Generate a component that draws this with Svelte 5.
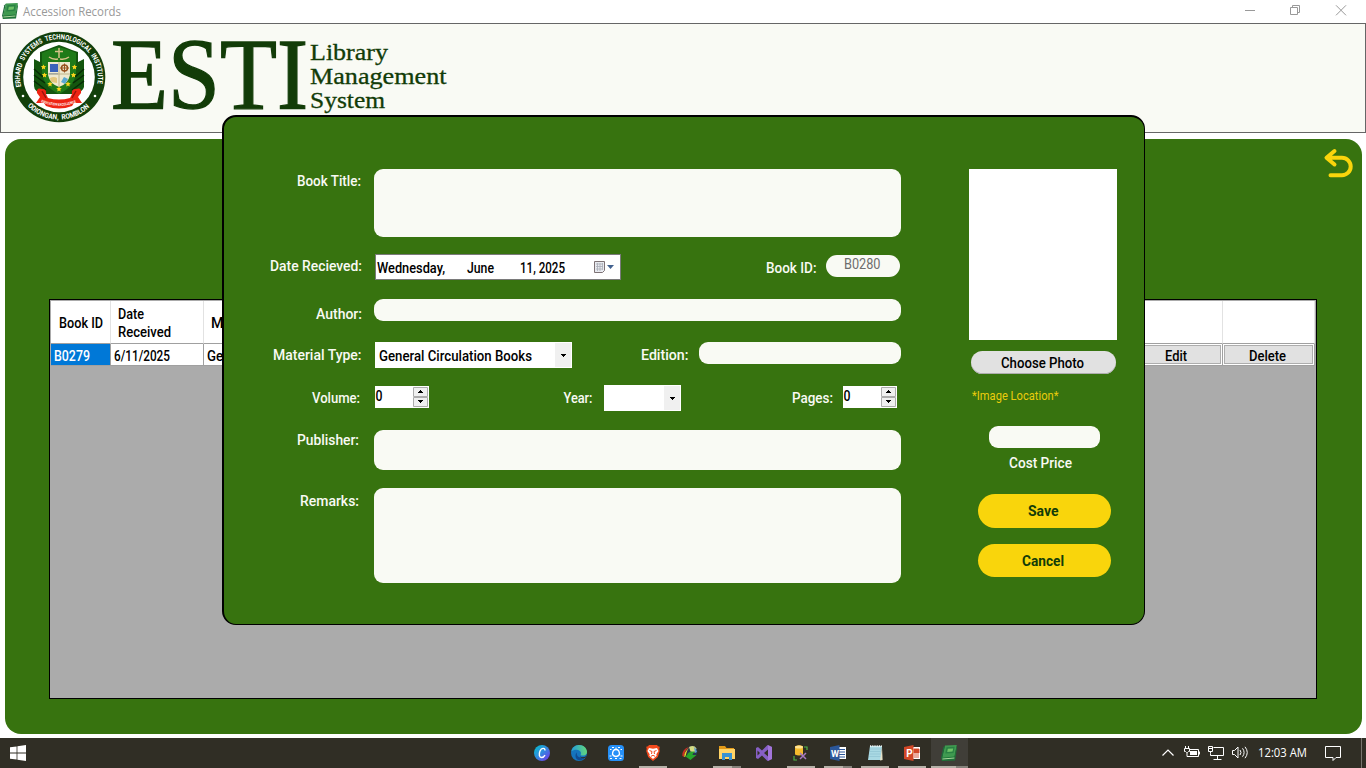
<script>
  const running = ['canva', 'edge', 'share', 'brave', 'idm', 'files', 'vs', 'sql', 'word', 'notes', 'ppt', 'book'];
  const underlined = ['brave', 'files', 'sql', 'word', 'notes', 'ppt', 'book'];
  const split = ['files', 'word', 'book'];
</script>

{#snippet t(w, h, x, y, len, text, cls = '')}
  <svg class="t {cls}" width={w} height={h}>
    <text {x} {y} textLength={len} lengthAdjust="spacingAndGlyphs">{text}</text>
  </svg>
{/snippet}

{#snippet bookIcon(size)}
  <svg width={size} height={size} viewBox="0 0 16 16">
    <path d="M4 .6 15.800 0 13.500 12.500 .8 13.800z" fill="#3f9a50" />
    <path d="M4 .6 1 13.800 0 12.800 2.300 2.200z" fill="#1d6d3b" />
    <path d="M5.500 2.300 13.700 1.800 12.500 8 4.300 8.600z" fill="#2a8244" />
    <path d="M6.800 3.800 12.200 3.400 11.500 6.500 6.200 6.900z" fill="#6fc267" />
    <path d="M.4 12.800 13.400 11.600 15.800 .3 16 3 14 15.400 .8 16z" fill="#1f7339" />
    <path d="M1.400 14 13.400 13" stroke="#a8d69a" stroke-width="1" />
  </svg>
{/snippet}

{#snippet numeric()}
  <div class="numeric">
    {@render t(38, 22, 0.5, 15, 7, '0', 'dark')}
    <svg class="spin" width="15" height="20" viewBox="0 0 15 20">
      <path d="M.5.5h14v9H.5zM.5 10.500h14v9H.5z" fill="#f0f0f0" stroke="#acacac" />
      <path d="M5 6h5v-1H9V4H8V3H7v1H6v1H5zM5 13h5v1H9v1H8v1H7v-1H6v-1H5z" fill="#000" />
    </svg>
  </div>
{/snippet}

{#snippet arrow()}
  <svg class="arrow" width="17" height="24"><path d="M6 11h5v1h-1v1H9v1H8v-1H7v-1H6z" fill="#000" /></svg>
{/snippet}

<div class="screen">
  <div class="titlebar">
    {@render bookIcon(16)}
    <svg class="caption" width="110" height="20"><text x="5" y="14" textLength="98" lengthAdjust="spacingAndGlyphs">Accession Records</text></svg>
    <svg class="controls" width="110" height="20" viewBox="0 0 110 20" fill="none" stroke="#999">
      <path d="M1 10.500h10M46.500 7.500h7v7h-7zM48.500 7V5.500h7v7H54" />
      <path d="m92 5.300 10 10M102 5.300l-10 10" />
    </svg>
  </div>

  <header>
    <svg class="brand" width="460" height="108" viewBox="0 0 460 108">
      <g transform="translate(58 53)">
        <ellipse rx="46.300" ry="45.300" fill="#12400b" />
        <ellipse rx="35.800" ry="35.300" fill="#fff" />
        <path id="ringTop" d="M-37.800 9.500A38.900 38.200 0 1 1 37.800 9.500" fill="none" />
        <path id="ringBottom" d="M-31.500 29A43 42.500 0 0 0 31.500 29" fill="none" />
        <text class="ring" textLength="136" lengthAdjust="spacingAndGlyphs"><textPath href="#ringTop">ERHARD &#160;SYSTEMS &#160;TECHNOLOGICAL &#160;INSTITUTE</textPath></text>
        <text class="ring" textLength="69" lengthAdjust="spacingAndGlyphs"><textPath href="#ringBottom">ODIONGAN, &#160;ROMBLON</textPath></text>
        <circle cx="-36" cy="19" r="1.300" fill="#fff" /><circle cx="36" cy="19" r="1.300" fill="#fff" />
        <path d="M-19-25-13-27Q-6-30 0-32 6-30 13-27L19-25V-15L25-18V10Q24 15 15 17H-15Q-25 15-25 9V-18L-19-15z" fill="#14560f" />
        <path d="M-17-24Q-8-28 0-30 8-28 17-24V-4Q15 10 0 17-15 10-17-4z" fill="#1f7a18" />
        <path d="M-25-8l9 8M-25-2l11 8M-25 4l12 9M25-8l-9 8M25-2l-11 8M25 4l-12 9" stroke="#072c06" stroke-width="1.500" />
        <path d="M0-29v10M-4-25.500h8M-10-20q4 3 9 2M10-20q-4 3-9 2" stroke="#d6c287" stroke-width="1.500" fill="none" />
        <path d="M-11-15H11V-2Q9 7 0 10-9 7-11-2z" fill="#eee9cf" />
        <path d="M-9-13h8v8h-8z" fill="#3a63bb" /><path d="M-10-4h9v1.500h-9z" fill="#99aabd" />
        <circle cx="5.500" cy="-9" r="3" fill="none" stroke="#98521f" stroke-width="1.500" />
        <path d="M5.500-13.500v9M1-9h9" stroke="#98521f" />
        <path d="M-9 1q4-2 7 0v5l-6-1z" fill="#e4c77e" /><path d="m2 5 3-5 4 2-3 5z" fill="#5aa8d2" />
        <path d="M0-15V10M-11-3H11" stroke="#b3a778" stroke-width=".8" />
        {#each [[-15.500, -10], [15.500, -10], [-14.500, -2], [14.500, -2], [-9, 7], [9, 7], [0, 12]] as [sx, sy]}
          <path transform="translate({sx} {sy})" d="m0-2.600.8 1.700 1.900.2-1.400 1.200.4 1.900L0 1.400l-1.700 1 .4-1.900-1.400-1.200 1.900-.2z" fill="#ffd51c" />
        {/each}
        <path d="M-17 12q-6-2-5 4l3 4-4 6 8 0 2 3q13 5 26 0l2-3 8 0-4-6 3-4q1-6-5-4-5 0-4 5l-2 4q-11 3-22 0l-2-4q1-5-4-5z" fill="#ee2413" />
        <path d="m-17 14 4 7M17 14l-4 7" stroke="#9c130d" stroke-width="1.500" />
        <path id="motto" d="M-18 25Q0 32.500 18 25" fill="none" />
        <text class="motto" textLength="36" lengthAdjust="spacingAndGlyphs"><textPath href="#motto">EDUCATION EXCELLENCE</textPath></text>
      </g>
      <text class="esti" x="110" y="84.500" textLength="197" lengthAdjust="spacingAndGlyphs">ESTI</text>
      <g class="sub">
        <text x="309" y="36" textLength="78" lengthAdjust="spacingAndGlyphs">Library</text>
        <text x="309" y="60" textLength="136.500" lengthAdjust="spacingAndGlyphs">Management</text>
        <text x="309" y="84" textLength="75" lengthAdjust="spacingAndGlyphs">System</text>
      </g>
    </svg>
  </header>

  <main>
    <section class="panel">
      <div class="toolbar">
        <svg width="30" height="32" viewBox="0 0 30 32" fill="none" stroke="#f9d50c" stroke-width="4" stroke-linecap="round" stroke-linejoin="round">
          <path d="M11.500 3 3.500 9.800l8 6.700M4.500 9.800h14.500a8.700 8.700 0 0 1 0 17.400H7.500" />
        </svg>
      </div>
      <div class="grid">
        <div class="row head">
          <div class="c1">{@render t(59, 42, 8, 27, 44, 'Book ID', 'dark')}</div>
          <div class="c2">
            <svg class="t dark" width="91" height="42">
              <text x="7" y="18" textLength="26" lengthAdjust="spacingAndGlyphs">Date</text>
              <text x="7" y="36" textLength="53" lengthAdjust="spacingAndGlyphs">Received</text>
            </svg>
          </div>
          <div class="mid">{@render t(120, 42, 7, 27, 87, 'Material Type', 'dark')}</div>
          <div class="c3"></div>
          <div class="c4"></div>
        </div>
        <div class="row body">
          <div class="c1 sel">{@render t(59, 21, 3, 17, 36, 'B0279', 'light')}</div>
          <div class="c2">{@render t(91, 21, 3, 17, 56, '6/11/2025', 'dark')}</div>
          <div class="mid">{@render t(180, 21, 3, 17, 153, 'General Circulation Books', 'dark')}</div>
          <div class="c3"><div class="cellbtn">{@render t(88, 17, 32, 15, 22, 'Edit', 'dark')}</div></div>
          <div class="c4"><div class="cellbtn">{@render t(87, 17, 24, 15, 37, 'Delete', 'dark')}</div></div>
        </div>
      </div>
    </section>
  </main>

  <div class="dialog">
    <div class="form">
      <div class="line title">
        {@render t(149, 68, 72, 17, 64, 'Book Title:')}
        <div class="box wide"></div>
      </div>
      <div class="line date">
        {@render t(150, 26, 45, 17, 92, 'Date Recieved:')}
        <div class="picker">
          <svg class="t dark" width="217" height="24">
            <text x="1" y="18" textLength="68" lengthAdjust="spacingAndGlyphs">Wednesday,</text>
            <text x="91" y="18" textLength="27" lengthAdjust="spacingAndGlyphs">June</text>
            <text x="144" y="18" textLength="45" lengthAdjust="spacingAndGlyphs">11, 2025</text>
          </svg>
          <svg width="22" height="24" viewBox="0 0 22 24">
            <path d="M1.500 6.500h10v9l-2 2h-8z" fill="#e8eaef" stroke="#7d7275" />
            <path d="M3 9h7M3 11.500h7M3 14h6M4.500 8v8M7 8v8M9.500 8v7" stroke="#a9adb7" stroke-width=".8" />
            <path d="M14 10h7l-3.500 4z" fill="#42618f" />
          </svg>
        </div>
        {@render t(205, 26, 145, 19, 50.5, 'Book ID:')}
        <div class="box bookid">{@render t(74, 22, 18, 14, 36.5, 'B0280', 'gray')}</div>
      </div>
      <div class="line author">
        {@render t(149, 22, 91, 20, 46, 'Author:')}
        <div class="box wide"></div>
      </div>
      <div class="line material">
        {@render t(150, 26, 48, 18, 88.5, 'Material Type:')}
        <div class="combo type">{@render t(178, 24, 3, 18, 153, 'General Circulation Books', 'dark')}{@render arrow()}</div>
        {@render t(127, 26, 69, 18, 47.5, 'Edition:')}
        <div class="box edition"></div>
      </div>
      <div class="line volume">
        {@render t(150, 26, 87, 18, 48, 'Volume:')}
        {@render numeric()}
        {@render t(175, 26, 134.5, 18, 29, 'Year:')}
        <div class="combo year">{@render arrow()}</div>
        {@render t(162, 26, 111, 18, 41, 'Pages:')}
        {@render numeric()}
      </div>
      <div class="line publisher">
        {@render t(149, 40, 72, 15, 62, 'Publisher:')}
        <div class="box wide"></div>
      </div>
      <div class="line remarks">
        {@render t(149, 95, 75, 18, 59, 'Remarks:')}
        <div class="box wide"></div>
      </div>
    </div>

    <aside>
      <div class="photo"></div>
      <button class="choose">{@render t(145, 23, 30, 17, 83, 'Choose Photo', 'dark')}</button>
      {@render t(148, 20, 3, 14, 86.5, '*Image Location*', 'hint')}
      <div class="box cost"></div>
      {@render t(148, 24, 40, 20, 63, 'Cost Price')}
      <button class="action save">{@render t(133, 34, 50, 22, 30.5, 'Save', 'strong')}</button>
      <button class="action">{@render t(133, 33, 44, 22, 42, 'Cancel', 'strong')}</button>
    </aside>
  </div>

  <footer>
    <div class="start">
      <svg width="16" height="16" viewBox="0 0 16 16" fill="#fff"><path d="M0 2.300 6.600 1.400v6.200H0zM7.400 1.300 16 0v7.600H7.400zM0 8.400h6.600v6.200L0 13.700zM7.400 8.400H16V16l-8.600-1.300z" /></svg>
    </div>
    <nav>
      {#each running as app}
        <div class="task" class:open={underlined.includes(app)} class:split={split.includes(app)} class:active={app === 'book'}>
          {#if app === 'book'}
            {@render bookIcon(16)}
          {:else}
            <svg width="16" height="16" viewBox="0 0 16 16">
              {#if app === 'canva'}
                <defs><linearGradient id="cv" x2="1" y2="1"><stop stop-color="#00c4cc" /><stop offset=".5" stop-color="#3487df" /><stop offset="1" stop-color="#7d2ae8" /></linearGradient></defs>
                <circle cx="8" cy="8" r="8" fill="url(#cv)" />
                <path d="M11 5.500C11 2.500 7.500 2.700 6 6c-1.500 3.500-.6 6.500 1.500 6.500 1.500 0 2.800-1 3.500-2.300" fill="none" stroke="#fff" stroke-width="1.400" />
              {:else if app === 'edge'}
                <defs><linearGradient id="eg"><stop stop-color="#249ed8" /><stop offset="1" stop-color="#63d879" /></linearGradient></defs>
                <circle cx="8" cy="8" r="8" fill="#1574bd" />
                <path d="M.3 6.500C1.500 1.500 5-.2 8.500 0c5 .3 7.500 4 7.500 7 0 3-3 4-5.500 3.500-1.500-.4-.5-1.200-.5-2.500C10 5.500 4.500 2.800.3 6.500z" fill="url(#eg)" />
                <path d="M6 7.500c-1 3 1.500 6.500 8 4.500C11 17 4.500 16 4.500 11c0-2 .6-3 1.500-3.500z" fill="#114b91" />
                <path d="M9 11.200c1.500 1.500 4 1.200 6.300-.2l-1 1.800c-2.500 1-4.500 0-5.300-1.600z" fill="#302e25" />
              {:else if app === 'share'}
                <rect width="16" height="16" rx="3.500" fill="#2590f8" />
                <path d="M4.500 9.500Q4.500 4.500 8 4.500t3.500 5Q10 11.500 8 11.500T4.500 9.500z" fill="none" stroke="#fff" stroke-width="1.300" />
                <path d="M2 4.500h1.500M4 2.500h2M10 2.500h2M12.500 4.500H14M2 13.500h2M11.500 13.500h2M7 13.500h2M1.500 11h2M12.500 11h2M8 2.500v2" stroke="#fff" />
              {:else if app === 'brave'}
                <path d="M4 0h8l1 1.200 1.800.5-.5 2.300.5 2-2 6L8 16l-4.800-4-2-6 .5-2-.5-2.300L3 1.200z" fill="#f34a1d" />
                <path d="m4 3 4 .8L12 3l1.500 3-2.200 3.300.4 1.500L8 14l-3.700-3.200.4-1.500L2.500 6z" fill="#fff" />
                <path d="m4.500 5.500 2.500 1-.5 2.500M11.500 5.500l-2.500 1 .5 2.500M6 11.300l2-1 2 1" fill="none" stroke="#f34a1d" stroke-width="1" />
              {:else if app === 'idm'}
                <circle cx="9.800" cy="6.500" r="5.700" fill="#25394d" /><path d="M7 2q5-2.500 7.500 1.500l-2 4-4-1z" fill="#d5dc83" />
                <path d="M12 2q3 2 3 5l-2 1z" fill="#5f9bcd" />
                <path d="M7 2Q0 4 .3 11l2 1Q2 6 7 2z" fill="#c93022" /><path d="M7.500 2.500Q2.500 6 2 12l2-1Q4 6 7.500 2.500z" fill="#f0d42c" />
                <path d="M13 6.500Q5.500 6 5 10.500H2l6.500 4.500 6-5h-4q0-2 2.500-3.500z" fill="#27a52c" />
              {:else if app === 'files'}
                <path d="M0 1h6l1.500 2H15v3H0z" fill="#e29a18" /><path d="M0 4h16v10H0z" fill="#ffd466" />
                <path d="M3 8h10v7h-3v-3H6v3H3z" fill="#3792d2" />
              {:else if app === 'vs'}
                <path d="M11.500 0 16 2v12l-4.500 2L6 10.500 2 14l-2-1V3l2-1 4 3.500z" fill="#865fc5" />
                <path d="M12 4.500v7L8 8zM1.500 5.500v5L4 8z" fill="#302e25" /><path d="m12 0 4 2v12l-4 2z" fill="#ae7fe2" opacity=".7" />
              {:else if app === 'sql'}
                <path d="M2 1.500q4-2.500 8 0v8q-4 2-8 0z" fill="#f4bb2c" /><ellipse cx="6" cy="2" rx="4" ry="1.500" fill="#ffe394" />
                <path d="M11 2h3v3M1 11v4h3" fill="none" stroke="#4eb447" stroke-width="1.200" /><path d="m7 8 6 6M13 8l-6 6" stroke="#a778c2" stroke-width="1.500" />
              {:else if app === 'word'}
                <path d="M8 2h8v12H8z" fill="#fff" /><path d="M9 4.500h6M9 7h6M9 9.500h6M9 12h6" stroke="#2b579a" /><path d="m0 2 9.500-2v16L0 14z" fill="#2b579a" />
                <text x="1" y="11.500" font-size="9" font-weight="700" textLength="8" lengthAdjust="spacingAndGlyphs" fill="#fff">W</text>
              {:else if app === 'notes'}
                <path d="M3 1h12l-1 14H1z" fill="#a9d9e3" /><path d="m15 2 .6 13-2.600.5z" fill="#e6e2c8" />
                <path d="M3 4h11M3 6.500h10.500M2.500 9h11M2.300 11.500h11" stroke="#8fc3d1" stroke-width=".7" /><path d="M3 1.200h12" stroke="#f0f5f5" stroke-width="1.800" stroke-dasharray="1 .8" />
              {:else}
                <path d="M8 2h8v12H8z" fill="#fff" /><path d="M10 4h5v4h-5zM10 10h5M10 12h5" fill="#d24726" stroke="#d24726" stroke-width=".9" /><path d="m0 2 9.500-2v16L0 14z" fill="#d24726" />
                <text x="2.200" y="11.500" font-size="10" font-weight="700" fill="#fff">P</text>
              {/if}
            </svg>
          {/if}
        </div>
      {/each}
    </nav>
    <svg class="tray" width="206" height="30" viewBox="0 0 206 30" fill="none" stroke="#fff">
      <path d="m2.500 17.500 5.500-5.500 5.500 5.500" stroke-width="1.200" />
      <path d="M30 11.500h8.500v7H27M39.500 13.500v3" /><path d="M30 13h7v4h-7z" fill="#fff" stroke="none" />
      <path d="M25.500 8v2M28.500 8v2M24.500 10.500h5v3h-1l-1 1h-1l-1-1h-1zM27 15v3.500" />
      <path d="M53.500 9.500h10v8H50.500v-2M57.500 18v3M53.500 21.500h8M48.500 8.500h4v5h-4zM50.500 13.500v2M48.500 10.500h4" />
      <path d="M72.500 12.500h2l3.500-3.500v11l-3.500-3.500h-2zM80 12q2 2.500 0 5M82.500 10.300q3.200 4.200 0 8.400M85 8.800q4.500 5.700 0 11.400" />
      <path d="M165.500 8.500h15v11h-4.500l-3 3v-3h-7.500z" />
      <path d="M201.500 0v30" stroke="#77756e" />
      <text x="98" y="19" textLength="49" lengthAdjust="spacingAndGlyphs" fill="#fff" stroke="none">12:03 AM</text>
    </svg>
  </footer>
</div>

<style>
  :global(body) { margin: 0; overflow: hidden; }
  .screen { width: 1366px; height: 768px; display: flex; flex-direction: column; position: relative; background: #fff; font-family: Roboto, sans-serif; }
  svg { display: block; flex: none; }
  .titlebar { height: 23px; display: flex; align-items: flex-start; padding: 3px 10px 0 2px; box-sizing: border-box; }
  .caption { font: 12px "Open Sans", sans-serif; fill: #999; margin-top: -1px; }
  .controls { margin-left: auto; margin-right: 2px; margin-top: -3px; }
  header { height: 110px; box-sizing: border-box; border: 1px solid #666; background: #f9faf4; flex: none; }
  .ring { font: 700 7.200px Roboto, sans-serif; fill: #fff; }
  .motto { font: 700 3.600px Roboto, sans-serif; fill: #fff; }
  .esti { font: 102px "Liberation Serif", serif; fill: #123c08; stroke: #123c08; stroke-width: 1.300; }
  .sub { font: 22.500px "Liberation Serif", serif; fill: #123c08; stroke: #123c08; stroke-width: .3; }
  main { height: 605px; box-sizing: border-box; padding: 6px 4px 4px 5px; flex: none; }
  .panel { height: 595px; box-sizing: border-box; border-radius: 16px; background: #37730f; padding: 9px 9px 0 44px; }
  .toolbar { height: 151px; display: flex; justify-content: flex-end; }
  .grid { width: 1268px; height: 400px; box-sizing: border-box; border: 1px solid #000; padding: 1px; background: #ababab; }
  .row { display: flex; background: #fff; width: 1264px; }
  .row > div { box-sizing: border-box; border-right: 1px solid #a0a0a0; border-bottom: 1px solid #a0a0a0; overflow: hidden; }
  .head { height: 43px; }
  .head > div { border-right-color: #e2e2e2; }
  .body { height: 22px; }
  .c1 { width: 60px; }
  .c2 { width: 93px; }
  .mid { flex: 1; }
  .c3 { width: 92px; }
  .c4 { width: 92px; }
  .body .c3, .body .c4 { padding: 1px; }
  .cellbtn { height: 19px; box-sizing: border-box; border: 1px solid #adadad; background: #e1e1e1; }
  .sel { background: #0078d7; }
  .t { font: 500 15px Roboto, sans-serif; fill: #f9faf4; }
  .t.dark { fill: #000; }
  .t.light { fill: #fff; }
  .t.gray { fill: #6d6d6d; font-weight: 400; }
  .t.hint { font-size: 13px; font-weight: 400; fill: #e9cc0c; }
  .t.strong { font-weight: 700; fill: #123c08; }
  .dialog { position: absolute; left: 222px; top: 115px; width: 923px; height: 510px; box-sizing: border-box; border: 2px solid #000; border-right-width: 1.500px; border-bottom-width: 1.500px; border-radius: 14px; background: #37730f; display: flex; padding: 52px 0 0 1px; }
  .form { width: 676px; display: flex; flex-direction: column; }
  .line { display: flex; }
  .box { background: #f9faf4; border-radius: 9px; box-sizing: border-box; flex: none; }
  .wide { width: 527px; }
  .title { height: 68px; }
  .date { margin-top: 17px; height: 26px; }
  .picker { width: 246px; height: 26px; box-sizing: border-box; border: 1px solid #7a7a7a; background: #fff; display: flex; flex: none; }
  .bookid { width: 74px; height: 22px; margin-top: 1px; border-radius: 11px; }
  .author { margin-top: 19px; height: 22px; }
  .material { margin-top: 21px; height: 26px; }
  .combo { height: 26px; box-sizing: border-box; padding: 1px 0 1px 1px; background: #fff; display: flex; justify-content: flex-end; flex: none; }
  .arrow { background: #f0f0f0; border-right: 1px solid #fff; margin-left: 1px; width: 16px; overflow: visible; }
  .type { width: 197px; }
  .year { width: 77px; }
  .edition { width: 202px; height: 22px; }
  .volume { margin-top: 17px; height: 26px; }
  .numeric { width: 54px; height: 22px; margin-top: 1px; background: #fff; display: flex; flex: none; }
  .spin { margin-top: 1px; }
  .publisher { margin-top: 19px; height: 40px; }
  .remarks { margin-top: 18px; height: 95px; }
  aside { margin-left: 68px; width: 148px; display: flex; flex-direction: column; }
  .photo { height: 171px; background: #fff; }
  button { display: block; padding: 0; border: 0; }
  .choose { margin: 11px 0 12px 2px; width: 145px; height: 23px; border-radius: 12px; background: #e1e1e1; box-shadow: inset 0 -1px #adadad; }
  .cost { width: 111px; height: 22px; margin: 20px 0 0 20px; }
  .action { width: 133px; height: 33px; margin-left: 9px; border-radius: 17px; background: #f9d50c; }
  .save { height: 34px; margin-top: 22px; margin-bottom: 16px; }
  footer { height: 30px; display: flex; background: #302e25; flex: none; }
  .start { width: 523px; padding: 7px 0 0 10px; box-sizing: border-box; }
  nav { display: flex; width: 445px; }
  .task { width: 37px; height: 30px; box-sizing: border-box; padding: 7px 0 0 11px; background: linear-gradient(#b5b1a8, #b5b1a8) 5px 28px / 0 2px no-repeat; }
  .task.open { background-size: 28px 2px; }
  .task.split { background-image: linear-gradient(90deg, #b5b1a8 68%, #85827b 68%); }
  .task.active { margin-left: 1px; padding-left: 10px; background-color: #403e38; background-position: 0 28px; background-size: 37px 2px; }
  .tray { margin-left: 192px; font: 12px "Open Sans", sans-serif; }
</style>
